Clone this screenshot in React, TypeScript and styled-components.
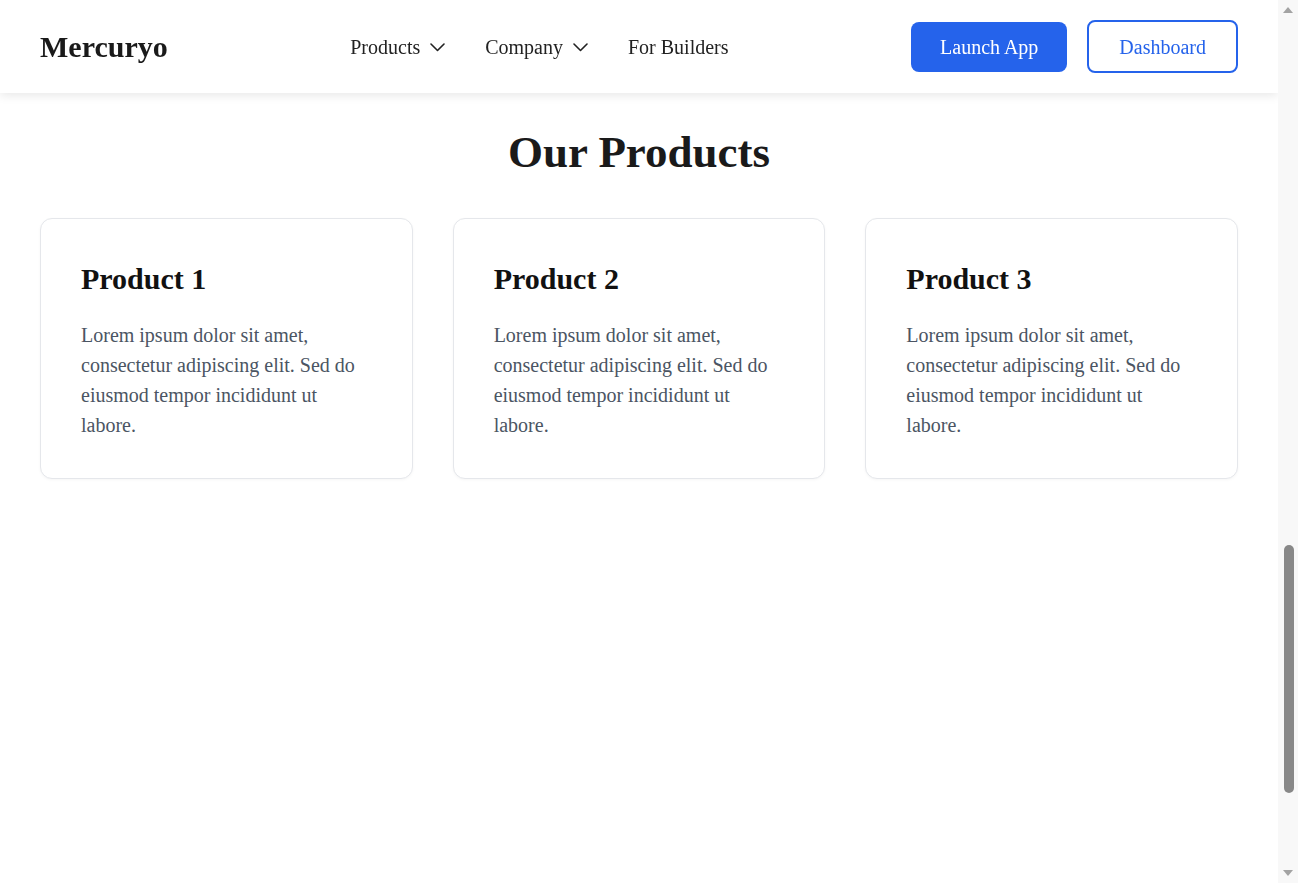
import React from "react";
import styled, { createGlobalStyle } from "styled-components";

const SCROLLBAR_WIDTH = 20;

const GlobalStyle = createGlobalStyle`
  body {
    margin: 0;
    background: #ffffff;
    font-family: "Liberation Serif", "Times New Roman", serif;
    color: #1a1a1a;
  }
  * { box-sizing: border-box; }
`;

const Layout = styled.div`
  margin-right: ${SCROLLBAR_WIDTH}px;
  min-height: 883px;
`;

const Header = styled.header`
  position: fixed;
  top: 0;
  left: 0;
  right: ${SCROLLBAR_WIDTH}px;
  z-index: 10;
  height: 93px;
  padding: 20px 40px;
  display: flex;
  align-items: center;
  justify-content: space-between;
  background: #ffffff;
  box-shadow: 0 2px 10px rgba(0, 0, 0, 0.1);
`;

const Logo = styled.div`
  font-size: 30px;
  font-weight: 700;
  color: #1a1a1a;
`;

const Nav = styled.nav`
  display: flex;
  align-items: center;
  gap: 40px;
  padding-top: 2px;
`;

const NavItem = styled.a`
  display: flex;
  align-items: center;
  gap: 10px;
  font-size: 20px;
  color: #222222;
  text-decoration: none;
  cursor: pointer;
`;

const Actions = styled.div`
  display: flex;
  align-items: center;
  gap: 20px;
`;

const Button = styled.button<{ $variant: "primary" | "outline" }>`
  display: inline-flex;
  align-items: center;
  justify-content: center;
  font-family: "Liberation Serif", "Times New Roman", serif;
  font-size: 20px;
  border-radius: 8px;
  cursor: pointer;
  padding-top: 2px;
  ${({ $variant }) =>
    $variant === "primary"
      ? `
    height: 50px;
    padding-left: 29px;
    padding-right: 29px;
    background: #2563eb;
    color: #ffffff;
    border: none;
  `
      : `
    height: 53px;
    padding-left: 30px;
    padding-right: 30px;
    background: #ffffff;
    color: #2563eb;
    border: 2px solid #2563eb;
  `}
`;

const Page = styled.main`
  padding-top: 93px;
`;

const ProductsSection = styled.section`
  padding: 33px 40px 80px;
`;

const SectionTitle = styled.h2`
  margin: 0 0 40px;
  font-size: 45px;
  line-height: 52px;
  font-weight: 700;
  text-align: center;
  color: #1a1a1a;
`;

const CardGrid = styled.div`
  display: grid;
  grid-template-columns: repeat(3, 1fr);
  gap: 40px;
`;

const Card = styled.article`
  padding: 40px 40px 38px;
  border: 1px solid #e5e7eb;
  border-radius: 12px;
  background: #ffffff;
  box-shadow: 0 1px 3px rgba(0, 0, 0, 0.04);
`;

const CardTitle = styled.h3`
  margin: 0 0 22px;
  font-size: 30px;
  line-height: 39px;
  font-weight: 700;
  color: #111111;
`;

const CardText = styled.p`
  margin: 0;
  font-size: 20px;
  line-height: 30px;
  color: #4b5563;
`;

/* Window scrollbar drawn over the right edge, as in the screenshot */
const ScrollBar = styled.div`
  position: fixed;
  top: 0;
  right: 0;
  bottom: 0;
  width: ${SCROLLBAR_WIDTH}px;
  z-index: 20;
  display: flex;
  flex-direction: column;
  align-items: center;
  background: #f8f8f8;
`;

const ScrollArrow = styled.div<{ $dir: "up" | "down" }>`
  flex: none;
  height: 20px;
  width: 100%;
  display: flex;
  align-items: center;
  justify-content: center;
  &::before {
    content: "";
    width: 0;
    height: 0;
    border-left: 5px solid transparent;
    border-right: 5px solid transparent;
    ${({ $dir }) =>
      $dir === "up"
        ? "border-bottom: 6px solid #a3a3a3;"
        : "border-top: 6px solid #a3a3a3;"}
  }
`;

const ScrollTrack = styled.div`
  flex: 1;
  width: 100%;
  display: flex;
  flex-direction: column;
  align-items: center;
`;

const ScrollThumb = styled.div`
  width: 10px;
  margin-left: 1px;
  border-radius: 5px;
  background: #888888;
`;

const Chevron = () => (
  <svg width="15" height="9" viewBox="0 0 15 9" fill="none" aria-hidden="true">
    <polyline
      points="1,1 7.5,7.5 14,1"
      stroke="#222222"
      strokeWidth="1.6"
      strokeLinecap="round"
      strokeLinejoin="round"
    />
  </svg>
);

const products = [
  { title: "Product 1" },
  { title: "Product 2" },
  { title: "Product 3" },
];

const lorem =
  "Lorem ipsum dolor sit amet, consectetur adipiscing elit. Sed do eiusmod tempor incididunt ut labore.";

const thumb = { top: 545 - 20, height: 248 };

export default function App() {
  return (
    <>
      <GlobalStyle />
      <Layout>
        <Header>
          <Logo>Mercuryo</Logo>
          <Nav>
            <NavItem>
              Products <Chevron />
            </NavItem>
            <NavItem>
              Company <Chevron />
            </NavItem>
            <NavItem>For Builders</NavItem>
          </Nav>
          <Actions>
            <Button $variant="primary">Launch App</Button>
            <Button $variant="outline">Dashboard</Button>
          </Actions>
        </Header>
        <Page>
          <ProductsSection>
            <SectionTitle>Our Products</SectionTitle>
            <CardGrid>
              {products.map((p) => (
                <Card key={p.title}>
                  <CardTitle>{p.title}</CardTitle>
                  <CardText>{lorem}</CardText>
                </Card>
              ))}
            </CardGrid>
          </ProductsSection>
        </Page>
      </Layout>
      <ScrollBar aria-hidden="true">
        <ScrollArrow $dir="up" />
        <ScrollTrack>
          <ScrollThumb style={{ marginTop: thumb.top, height: thumb.height }} />
        </ScrollTrack>
        <ScrollArrow $dir="down" />
      </ScrollBar>
    </>
  );
}
